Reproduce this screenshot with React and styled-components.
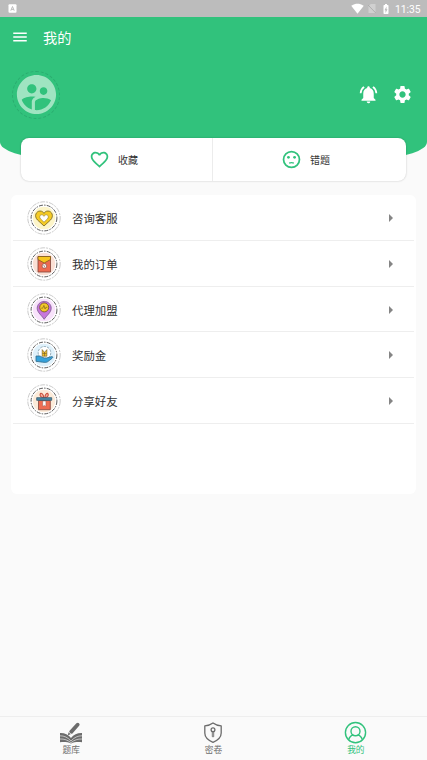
import React, { Fragment } from 'react'
//Icons
import {
    MdMenu,
    MdSettings,
    MdNotificationsActive,
    MdSupervisedUserCircle,
    MdFavoriteBorder,
    MdSignalWifi4Bar,
    MdBatteryChargingFull
} from 'react-icons/md';
//Others
import styled, { createGlobalStyle } from 'styled-components';

const GREEN = '#31c27c';

const GlobalStyle = createGlobalStyle`
    * {
        box-sizing: border-box;
    }

    body {
        margin: 0;
        background: #fafafa;
        font-family: Roboto, 'Noto Sans CJK SC', sans-serif;
        color: #333;
    }

    svg {
        display: block;
        flex-shrink: 0;
    }
`;

const Screen = styled.div`
    width: 427px;
    height: 760px;
    display: flex;
    flex-direction: column;
    overflow: hidden;
    background: #fafafa;
`;

const StatusBar = styled.div`
    height: 17px;
    flex-shrink: 0;
    display: flex;
    align-items: center;
    justify-content: space-between;
    padding: 0 6px 0 8px;
    background: #bcbcbc;
    color: #fff;
`;

const StatusIcons = styled.div`
    display: flex;
    align-items: center;
    gap: 3px;
`;

const Clock = styled.span`
    width: 26px;
    font-size: 10.3px;
    line-height: 17px;
    white-space: nowrap;
    padding-top: 1px;
`;

const Header = styled.header`
    height: 141px;
    flex-shrink: 0;
    background: ${GREEN};
    border-radius: 0 0 50px 50px / 0 0 16px 16px;
`;

const TitleBar = styled.div`
    height: 40px;
    display: flex;
    align-items: center;
    padding-left: 11px;
    color: #fff;
`;

const Title = styled.h1`
    margin: 0 0 0 14px;
    font-size: 14.2px;
    font-weight: 400;
    line-height: 20px;
    padding-top: 1px;
`;

const UserBar = styled.div`
    height: 75px;
    display: flex;
    align-items: center;
    padding: 0 14px 0 12px;
    color: #fff;
`;

const Avatar = styled.div`
    width: 48px;
    height: 48px;
    display: flex;
    align-items: center;
    justify-content: center;
    margin-right: auto;
    border: 1px dashed #2bac70;
    border-radius: 50%;
    color: #9fe4c1;
`;

const Actions = styled.div`
    display: flex;
    gap: 13px;
`;

const Shortcuts = styled.section`
    width: 385px;
    height: 43px;
    flex-shrink: 0;
    display: flex;
    margin: -20px 0 0 21px;
    background: #fff;
    border-radius: 8px;
    box-shadow: 0 0 2px rgba(0, 0, 0, .24);
`;

const Shortcut = styled.div`
    flex: 1;
    display: flex;
    align-items: center;
    justify-content: center;
    gap: 8px;
    padding-right: 6px;
    font-size: 10px;
    color: #333;

    svg{
        color: ${GREEN};
    }

    & + &{
        border-left: 1px solid #ececec;
        padding-right: 8px;
    }
`;

const List = styled.section`
    height: 299px;
    flex-shrink: 0;
    margin: 14px 11px 0;
    padding: .4px 2px 0;
    background: #fff;
    border-radius: 6px;
`;

const Row = styled.div`
    height: 45.7px;
    display: flex;
    align-items: center;
    padding: 1px 21px 0 14px;
    border-bottom: 1px solid #eee;
`;

const Label = styled.span`
    flex: 1;
    margin-left: 11px;
    font-size: 11.4px;
    line-height: 16px;
    color: #303030;
    padding-top: 2px;
`;

const Arrow = styled.span`
    width: 0;
    height: 0;
    border: 4px solid transparent;
    border-left: 4px solid #858585;
    border-right: 0;
`;

const TabBar = styled.nav`
    height: 44px;
    flex-shrink: 0;
    display: flex;
    margin-top: auto;
    border-top: 1px solid #eee;
`;

const Tab = styled.div`
    flex: 1;
    display: flex;
    flex-direction: column;
    align-items: center;
    padding-top: 4px;
    color: ${props => props.$active ? GREEN : '#6c6c6c'};
    font-size: 8.7px;
    line-height: 11px;

    span{
        margin-top: 1px;
    }
`;

const KeyboardIcon = () => (
    <svg width="9" height="9" viewBox="0 0 9 9">
        <rect x=".5" y=".3" width="8" height="8.4" rx="1" fill="#fff" />
        <path d="M2.8 6.7 4.5 2.5 6.2 6.7M3.4 5.4h2.2" fill="none" stroke="#b5b5b5" strokeWidth=".9" />
    </svg>
)

const NoSimIcon = () => (
    <svg width="10" height="11" viewBox="0 0 9 11">
        <path d="M3.3 1H8v9H1V3.3z" fill="#d0d0d0" />
        <path d="M.5 2 8.3 10" stroke="#aaa" strokeWidth=".9" />
    </svg>
)

const FaceIcon = () => (
    <svg width="21" height="21" viewBox="0 0 24 24" fill="none" stroke="currentColor">
        <circle cx="12" cy="12" r="9.1" strokeWidth="2" />
        <path d="M9.3 16.2q2.7-1.4 5.4 0" strokeWidth="1.5" />
        <circle cx="8.5" cy="9.5" r="1.6" fill="currentColor" stroke="none" />
        <circle cx="15.5" cy="9.5" r="1.6" fill="currentColor" stroke="none" />
    </svg>
)

// Anillos punteados comunes a todos los iconos de la lista
const RingIcon = ({tint, children}) => (
    <svg width="34" height="34" viewBox="0 0 34 34" strokeLinejoin="round">
        <circle cx="17" cy="17" r="16.2" fill="none" stroke="#b5b5b5" strokeWidth=".7" strokeDasharray="5 1 2 1" />
        <circle cx="17" cy="17" r="12.9" fill="none" stroke="#4b4b4b" strokeWidth=".9" strokeDasharray="4 1.2 1.5 1.2" />
        <circle cx="17" cy="17" r="11.2" fill={tint} />
        {children}
    </svg>
)

const HeartIcon = () => (
    <RingIcon tint="#fdf5c9">
        <path d="M17 25 10.5 19C6.5 14.8 9.5 10 13 10c2 0 3.2 1 4 2.3C17.8 11 19 10 21 10c3.5 0 6.5 4.8 2.5 9z" fill="#f5cb25" stroke="#72601c" strokeWidth=".8" />
        <path d="M17 21.2 13.7 18c-2-2.1-.5-4.2 1-4.2 1.1 0 1.8.7 2.3 1.5.5-.8 1.2-1.5 2.3-1.5 1.5 0 3 2.1 1 4.2z" fill="#fff" stroke="#8f7721" strokeWidth=".6" />
    </RingIcon>
)

const EnvelopeIcon = () => (
    <RingIcon tint="#fbe0d5">
        <path d="M11 9.5h12.5V25H11z" fill="#ed6a50" stroke="#7d443a" strokeWidth=".8" />
        <path d="M11 9.5h12.5v3L17.2 16 11 12.5z" fill="#f7c51e" stroke="#7d5a21" strokeWidth=".8" />
        <circle cx="17.4" cy="19" r="2.3" fill="#fff" stroke="#78453b" strokeWidth=".6" />
        <path d="m16.3 18 1.1 1.1 1.1-1.1M17.4 19v1.5" fill="none" stroke="#7b3d35" strokeWidth=".5" />
    </RingIcon>
)

const PinIcon = () => (
    <RingIcon tint="#f8e2fb">
        <path d="M17.2 26.3c-2.2-3.5-7-6.8-7-11 0-3.9 3.1-6.9 7-6.9s7 3 7 6.9c0 4.2-4.8 7.5-7 11z" fill="#c775dc" stroke="#79558c" strokeWidth=".8" />
        <circle cx="17.2" cy="14.4" r="4.5" fill="#f3c928" stroke="#6b5322" strokeWidth=".8" />
        <path d="M14.2 15.2h1.5l1.2-2.8 1.2 3.6.8-1.7h1.5" fill="none" stroke="#80631e" strokeWidth=".7" />
    </RingIcon>
)

const CoinHandIcon = () => (
    <RingIcon tint="#dff1fb">
        <circle cx="17.5" cy="14.8" r="6.3" fill="#fff" stroke="#587b8b" strokeWidth=".6" strokeDasharray="2.5 1" />
        <path d="m15.2 11.6 2.3 2.8 2.4-2.8v6.6h-4.7z" fill="#f2bf27" stroke="#705b2b" strokeWidth=".6" />
        <path d="M15.5 15.5h4M17.5 14v4.2" stroke="#705b2b" strokeWidth=".6" />
        <path d="M9 18h3.2c2.2 0 3 1.9 5.2 1.9h2.2l5.3-1.3c1.1-.1 1 1.2.2 1.7l-4.5 3.5c-1.2.8-3 .6-5 .4L9 23.3z" fill="#35a1da" stroke="#336a88" strokeWidth=".8" />
    </RingIcon>
)

const GiftIcon = () => (
    <RingIcon tint="#fcebd9">
        <path d="M16.8 14c-3-1-4-2.2-3.7-3.7.5-2 3.5-1 3.7 3.7zM17.8 14c3-1 3.7-2.2 3.4-3.7-.5-2-3.2-1-3.4 3.7z" fill="#f7b09e" stroke="#c74f3c" strokeWidth="1.1" />
        <path d="M11.5 16.5h11.8v9.2H11.5z" fill="#ef6d52" stroke="#82463c" strokeWidth=".8" />
        <path d="M9.7 13.7h15v2.6h-15z" fill="#498aa6" stroke="#38596d" strokeWidth=".8" />
        <path d="M15.7 17h3.2v5.4l-1.6-1-1.6 1z" fill="#fff" stroke="#82463c" strokeWidth=".4" />
    </RingIcon>
)

// Libro abierto con la pluma encima
const BookIcon = () => (
    <svg width="24" height="23" viewBox="0 0 24 23" fill="currentColor">
        <path d="M1 12c4.4-.2 8.2 1.4 11 5 2.8-3.6 6.6-5.2 11-5v9.3c-4.2-.5-7.8-.2-11 1.1-3.2-1.3-6.8-1.6-11-1.1z" />
        <path d="M1 14.8c4.2-.1 7.8 1.7 11 5.2 3.2-3.5 6.8-5.3 11-5.2M1 18c4.2-.2 7.8 1 11 3.7 3.2-2.7 6.8-3.9 11-3.7" fill="none" stroke="#fafafa" strokeWidth=".6" />
        <path d="m11.4 10.6 6.8-7.5c.8-.7 1.7.1 1.1.9l-6.7 7.7z" stroke="currentColor" strokeWidth="2.2" strokeLinejoin="round" />
        <path d="m9.6 11.3 2.1 1.9-2.9 1.1z" />
    </svg>
)

const ShieldIcon = () => (
    <svg width="22" height="23" viewBox="0 0 22 23" fill="none" stroke="currentColor">
        <path d="M11 2c2.4 1.9 5 2.6 8.2 2.8V12c0 4.2-3.2 7.2-8.2 9.3C6 19.2 2.8 16.2 2.8 12V4.8C6 4.6 8.6 3.9 11 2z" strokeWidth="1.3" strokeLinejoin="round" />
        <circle cx="11" cy="8.8" r="1.9" strokeWidth="1.3" />
        <path d="M10.3 10.7v5h1.4v-5" strokeWidth=".9" />
    </svg>
)

const PersonIcon = () => (
    <svg width="23" height="23" viewBox="0 0 23 23" fill="none" stroke="currentColor" strokeWidth="1.4">
        <circle cx="11.5" cy="11.6" r="10.1" />
        <circle cx="11.5" cy="10.2" r="4.5" />
        <path d="M4.5 18.9c1-2.9 3-4.6 4.9-5.1M18.5 18.9c-1-2.9-3-4.6-4.9-5.1" />
    </svg>
)

const rows = [
    { label: '咨询客服', Icon: HeartIcon },
    { label: '我的订单', Icon: EnvelopeIcon },
    { label: '代理加盟', Icon: PinIcon },
    { label: '奖励金', Icon: CoinHandIcon },
    { label: '分享好友', Icon: GiftIcon }
];

const tabs = [
    { label: '题库', Icon: BookIcon },
    { label: '密卷', Icon: ShieldIcon },
    { label: '我的', Icon: PersonIcon, active: true }
];

const App = () => {
    return (
        <Fragment>
            <GlobalStyle />
            <Screen>
                <StatusBar>
                    <KeyboardIcon />
                    <StatusIcons>
                        <MdSignalWifi4Bar size={13} />
                        <NoSimIcon />
                        <MdBatteryChargingFull size={12} />
                        <Clock>11:35</Clock>
                    </StatusIcons>
                </StatusBar>
                <Header>
                    <TitleBar>
                        <MdMenu size={18} />
                        <Title>我的</Title>
                    </TitleBar>
                    <UserBar>
                        <Avatar><MdSupervisedUserCircle size={47} /></Avatar>
                        <Actions>
                            <MdNotificationsActive size={21} />
                            <MdSettings size={21} />
                        </Actions>
                    </UserBar>
                </Header>
                <Shortcuts>
                    <Shortcut><MdFavoriteBorder size={21} />收藏</Shortcut>
                    <Shortcut><FaceIcon />错题</Shortcut>
                </Shortcuts>
                <List>
                    {
                        rows.map(({label, Icon}) => (
                            <Row key={label}>
                                <Icon />
                                <Label>{label}</Label>
                                <Arrow />
                            </Row>
                        ))
                    }
                </List>
                <TabBar>
                    {
                        tabs.map(({label, Icon, active}) => (
                            <Tab key={label} $active={active}>
                                <Icon />
                                <span>{label}</span>
                            </Tab>
                        ))
                    }
                </TabBar>
            </Screen>
        </Fragment>
    )
}

export default App
